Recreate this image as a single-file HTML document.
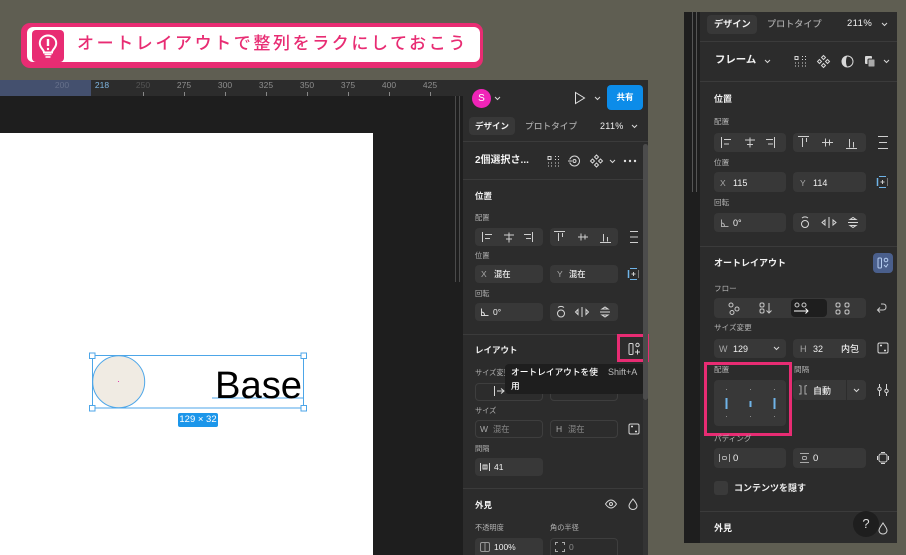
<!DOCTYPE html>
<html lang="ja"><head><meta charset="utf-8"><title>オートレイアウト</title>
<style>
html,body{margin:0;padding:0}
body{width:906px;height:555px;position:relative;overflow:hidden;background:#5f5e52;font-family:"Liberation Sans","Noto Sans CJK JP",sans-serif;color:#fff}
.a{position:absolute}
.t{position:absolute;white-space:nowrap;line-height:14px;height:14px;font-size:8.5px;font-weight:500;color:#f0f0f0;margin-top:1px}
.h{font-size:8.5px;font-weight:700;color:#f2f2f2}
.h2{font-size:9px;font-weight:700;color:#f2f2f2}
.l{font-size:7.2px;color:#b4b4b4;font-weight:400}
.l2{font-size:7.6px;color:#b4b4b4;font-weight:400}
.d{color:#a8a8a8}
.m{color:#8a8a8a;font-weight:400}
.f{position:absolute;background:#383838;border-radius:4px}
.o{position:absolute;box-sizing:border-box;border:1px solid #3e3e3e;border-radius:4px}
.r{position:absolute;background:#3b3b3b;height:1px}
.rt{position:absolute;top:80px;font-size:8.5px;line-height:11px;width:30px;text-align:center;color:#8e8e8e;font-family:"Liberation Sans",sans-serif}
svg{position:absolute;overflow:visible}
.s{fill:none;stroke:#d8d8d8;stroke-width:1}
</style></head><body>

<!-- banner -->
<div class="a" style="left:21px;top:23px;width:462px;height:45px;background:#e82c73;border-radius:9px"></div>
<div class="a" style="left:27px;top:27px;width:453px;height:35px;background:#fff;border-radius:6px"></div>
<div class="a" style="left:32px;top:30px;width:32px;height:32px;background:#e82c73;border-radius:4px"></div>
<svg style="left:32px;top:30px" width="32" height="32" viewBox="0 0 32 32"><path d="M12 22.500c0-3-4.200-4.500-4.200-9.300C7.800 8.800 11.500 5.500 16 5.500s8.200 3.300 8.200 7.700c0 4.800-4.200 6.300-4.200 9.300z" fill="none" stroke="#fff" stroke-width="2"/><path d="M16 9v7" stroke="#fff" stroke-width="2.400"/><circle cx="16" cy="19" r="1.200" fill="#fff"/><path d="M12.500 24.500h7M13.500 27h5" stroke="#fff" stroke-width="1.500"/></svg>
<div class="t" style="left:77px;top:31px;height:24px;line-height:24px;font-size:17px;letter-spacing:2.6px;font-weight:500;color:#e82c73">オートレイアウトで整列をラクにしておこう</div>

<!-- left window -->
<div class="a" style="left:0;top:80px;width:463px;height:16px;background:#2c2c2c"></div>
<div class="a" style="left:0;top:80px;width:91px;height:16px;background:#44506e"></div>
<div class="a" style="left:0;top:96px;width:463px;height:459px;background:#1e1e1e"></div>
<div class="a" style="left:455px;top:96px;width:1px;height:186px;background:#4a4a4a"></div>
<div class="a" style="left:459px;top:96px;width:1px;height:186px;background:#4a4a4a"></div>
<div class="rt" style="left:47px;color:#66708a">200</div>
<div class="rt" style="left:87px;color:#7fb6e0">218</div>
<div class="rt" style="left:128px;color:#555">250</div>
<div class="rt" style="left:169px">275</div>
<div class="rt" style="left:210px">300</div>
<div class="rt" style="left:251px">325</div>
<div class="rt" style="left:292px">350</div>
<div class="rt" style="left:333px">375</div>
<div class="rt" style="left:374px">400</div>
<div class="rt" style="left:415px">425</div>
<svg style="left:0;top:92px" width="463" height="4"><path d="M143.500 0v4M184.500 0v4M225.500 0v4M266.500 0v4M307.500 0v4M348.500 0v4M389.500 0v4M430.500 0v4" stroke="#888" stroke-width="1"/></svg>
<div class="a" style="left:0;top:133px;width:373px;height:422px;background:#fff"></div>

<!-- selection -->
<svg style="left:80px;top:340px" width="240" height="95">
<circle cx="38.700" cy="41.700" r="26" fill="#f0ebe3" stroke="#4da6e8" stroke-width="1"/>
<rect x="12.500" y="15.500" width="211" height="52.500" fill="none" stroke="#4da6e8" stroke-width="1"/>
<path d="M132 58h92" stroke="#4da6e8"/>
<rect x="38" y="41" width="1" height="1" fill="#e040b0"/>
<g fill="#fff" stroke="#4da6e8"><rect x="9.500" y="13" width="5.500" height="5.500"/><rect x="221" y="13" width="5.500" height="5.500"/><rect x="9.500" y="65.500" width="5.500" height="5.500"/><rect x="221" y="65.500" width="5.500" height="5.500"/></g>
</svg>
<div class="t" style="left:215px;top:363px;height:44px;line-height:44px;font-size:38.2px;font-weight:400;color:#000">Base</div>
<div class="a" style="left:178px;top:413px;width:40px;height:14px;background:#1c96ea;border-radius:2px;color:#fff;font-size:9.5px;line-height:14px;text-align:center">129 × 32</div>

<!-- left panel -->
<div class="a" style="left:463px;top:80px;width:185px;height:475px;background:#2c2c2c"></div>
<div class="a" style="left:472px;top:89px;width:19px;height:19px;border-radius:50%;background:#f024b8;font-size:10px;line-height:19px;text-align:center;color:#fff">S</div>
<svg style="left:494px;top:96px" width="7" height="5"><path class="s" d="M1 1l2.500 2.500L6 1"/></svg>
<svg style="left:574px;top:91px" width="12" height="14"><path d="M1.500 1.500v11l9-5.500z" fill="none" stroke="#e0e0e0" stroke-width="1"/></svg>
<svg style="left:594px;top:96px" width="7" height="5"><path class="s" d="M1 1l2.500 2.500L6 1"/></svg>
<div class="a" style="left:607px;top:85px;width:36px;height:25px;border-radius:4px;background:#0c8ce9;font-size:8.5px;font-weight:700;line-height:25px;text-align:center;color:#fff">共有</div>
<div class="a" style="left:469px;top:117px;width:46px;height:18px;border-radius:4px;background:#383838"></div>
<div class="t h" style="left:475px;top:118px">デザイン</div>
<div class="t d" style="left:525px;top:118px;font-size:8.7px">プロトタイプ</div>
<div class="t" style="left:600px;top:118px;font-size:9px;letter-spacing:.3px">211%</div>
<svg style="left:631px;top:124px" width="7" height="5"><path class="s" d="M1 1l2.500 2.500L6 1"/></svg>
<div class="r" style="left:463px;top:141px;width:185px"></div>
<div class="t h" style="left:475px;top:153px;font-size:10px">2個選択さ...</div>
<svg style="left:547px;top:155px" width="13" height="13"><path d="M1 1.500h3v3H1zM8 1.500h1M11 1.500h1M8 4.500h1M11 4.500h1M1 8h1M4 8h1M1 11h1M4 11h1M8 8h1M11 8h1M8 11h1M11 11h1" class="s"/></svg>
<svg style="left:568px;top:154px" width="13" height="14"><circle cx="6.500" cy="7" r="5" class="s"/><circle cx="6.500" cy="7" r="1.500" class="s"/><path d="M0 7h4" stroke="#2c2c2c" stroke-width="3"/><path d="M0 7h4" class="s"/></svg>
<svg style="left:590px;top:154px" width="13" height="14"><path class="s" d="M6.500 1l2 2-2 2-2-2zM6.500 9l2 2-2 2-2-2zM2.500 5l2 2-2 2-2-2zM10.500 5l2 2-2 2-2-2z"/></svg>
<svg style="left:609px;top:159px" width="7" height="5"><path class="s" d="M1 1l2.500 2.500L6 1"/></svg>
<svg style="left:623px;top:159px" width="14" height="4"><circle cx="2" cy="2" r="1.200" fill="#e0e0e0"/><circle cx="7" cy="2" r="1.200" fill="#e0e0e0"/><circle cx="12" cy="2" r="1.200" fill="#e0e0e0"/></svg>
<div class="r" style="left:463px;top:179px;width:185px"></div>
<div class="t h" style="left:475px;top:188px">位置</div>
<div class="t l" style="left:475px;top:210px">配置</div>
<div class="f" style="left:475px;top:228px;width:68px;height:18px"></div>
<div class="f" style="left:550px;top:228px;width:68px;height:18px"></div>
<svg style="left:475px;top:228px" width="170" height="18"><g class="s" style="stroke:#cfcfcf"><path d="M7.500 4v10M10 6.500h7M10 10.500h5"/><path d="M34 4.500v10M29 7h10M31 11h6"/><path d="M57.500 4v10M49 6.500h7M51 10.500h5"/><path d="M79 3.500h11M83.500 5v8M87.500 5v4"/><path d="M103 9h10M106 5.500v7M110 6.500v5"/><path d="M125 14.500h11M128.500 6v7.500M132.500 9v4.500"/><path d="M155 3.500h8M155 14.500h8M155 9h8"/></g></svg>

<div class="t l" style="left:475px;top:248px">位置</div>
<div class="f" style="left:475px;top:265px;width:68px;height:18px"></div>
<div class="f" style="left:550px;top:265px;width:68px;height:18px"></div>
<div class="t d" style="left:481px;top:266px">X</div>
<div class="t" style="left:494px;top:266px;font-size:8.3px">混在</div>
<div class="t d" style="left:557px;top:266px">Y</div>
<div class="t" style="left:569px;top:266px;font-size:8.3px">混在</div>
<svg style="left:627px;top:267px" width="13" height="14"><path d="M3 1.500H10M3 12.500H10" stroke="#6fb4e8"/><path d="M1.500 3v8" stroke="#6fb4e8" stroke-width="1.500"/><path d="M11.500 3v8" stroke="#777"/><path d="M6.500 5v4M4.500 7h4" stroke="#ccc"/></svg>
<div class="t l" style="left:475px;top:286px">回転</div>
<div class="f" style="left:475px;top:303px;width:68px;height:18px"></div>
<div class="f" style="left:550px;top:303px;width:68px;height:18px"></div>
<svg style="left:480px;top:307px" width="10" height="10"><path class="s" d="M1.500 1.500v7h7M1.500 5c2 0 3 1 3 3.500"/></svg>
<div class="t" style="left:493px;top:304px">0°</div>
<svg style="left:550px;top:303px" width="68" height="18"><g class="s"><circle cx="11" cy="10.500" r="3.500"/><path d="M8 4.500c2-1.500 4-1.500 6 0"/><path d="M32 4v10M28 6.500v5l-2.500-2.500zM36 6.500v5l2.500-2.500z"/><path d="M50 9h10M52 6l3-2 3 2zM52 12l3 2 3-2z"/></g></svg>
<div class="r" style="left:463px;top:334px;width:185px"></div>
<div class="t h" style="left:475px;top:342px">レイアウト</div>
<svg style="left:628px;top:342px" width="13" height="14"><rect x="1" y="1.500" width="4" height="11" rx="1" class="s"/><circle cx="9.500" cy="3" r="1.700" class="s"/><path d="M9.500 7.500v5M7 10h5" class="s"/></svg>
<div class="a" style="left:617px;top:334px;width:26px;height:22px;border:3px solid #e82c73"></div>
<div class="t l" style="left:475px;top:365px">サイズ変更</div>
<div class="o" style="left:475px;top:383px;width:68px;height:18px"></div>
<div class="o" style="left:550px;top:383px;width:68px;height:18px"></div>
<svg style="left:493px;top:385px" width="12" height="12"><path class="s" d="M1.500 1v10M4 6h7M8 3.500L11 6 8 8.500"/></svg>
<div class="a" style="left:505px;top:364px;width:140px;height:30px;background:#1e1e1e;border-radius:4px"></div>
<div class="t" style="left:511px;top:364px;font-size:8.7px;color:#fff">オートレイアウトを使</div>
<div class="t" style="left:511px;top:378px;font-size:8.7px;color:#fff">用</div>
<div class="t d" style="left:608px;top:364px;font-size:9px;font-weight:400;color:#bbb">Shift+A</div>
<div class="t l" style="left:475px;top:403px">サイズ</div>
<div class="o" style="left:475px;top:420px;width:68px;height:18px"></div>
<div class="o" style="left:550px;top:420px;width:68px;height:18px"></div>
<div class="t d" style="left:480px;top:421px">W</div>
<div class="t m" style="left:493px;top:421px;font-size:8.3px">混在</div>
<div class="t d" style="left:556px;top:421px">H</div>
<div class="t m" style="left:568px;top:421px;font-size:8.3px">混在</div>
<svg style="left:628px;top:423px" width="12" height="12"><rect x="1" y="1" width="10" height="10" rx="1.500" class="s"/><path d="M3 3.500h2M9 8.500H7" stroke="#ddd" stroke-width="1.400"/></svg>
<div class="t l" style="left:475px;top:441px">間隔</div>
<div class="f" style="left:475px;top:458px;width:68px;height:18px"></div>
<svg style="left:480px;top:462px" width="10" height="10"><path class="s" d="M.5 1v8M9.500 1v8M3 3h4v4H3zM5 3v4"/></svg>
<div class="t" style="left:494px;top:459px">41</div>
<div class="r" style="left:463px;top:488px;width:185px"></div>
<div class="t h" style="left:475px;top:497px">外見</div>
<svg style="left:605px;top:499px" width="12" height="10"><path class="s" d="M.5 5C2.500 2 4 1 6 1s3.500 1 5.500 4C9.500 8 8 9 6 9S2.500 8 .5 5z"/><circle cx="6" cy="5" r="1.500" class="s"/></svg>
<svg style="left:628px;top:498px" width="10" height="12"><path class="s" d="M5 1C3.500 3 1 5.500 1 8a4 3.500 0 0 0 8 0C9 5.500 6.500 3 5 1z"/></svg>
<div class="t l" style="left:475px;top:520px">不透明度</div>
<div class="t l" style="left:550px;top:520px">角の半径</div>
<div class="f" style="left:475px;top:538px;width:68px;height:17px;border-radius:4px 4px 0 0"></div>
<div class="o" style="left:550px;top:538px;width:68px;height:17px;border-bottom:0;border-radius:4px 4px 0 0"></div>
<svg style="left:480px;top:542px" width="10" height="10"><rect x=".5" y=".5" width="9" height="9" rx="1.500" class="s" style="stroke:#999"/><path d="M5 .5v9" stroke="#999"/></svg>
<div class="t" style="left:494px;top:539px">100%</div>
<svg style="left:555px;top:542px" width="10" height="10"><path d="M.5 3V.5H3M7 .5h2.500V3M9.500 7v2.500H7M3 9.500H.5V7" fill="none" stroke="#aaa"/></svg>
<div class="t m" style="left:569px;top:539px">0</div>
<div class="a" style="left:643px;top:144px;width:5px;height:256px;background:#4c4c4c;border-radius:3px"></div>
<div class="a" style="left:643px;top:400px;width:5px;height:155px;background:#343434"></div>

<!-- right window -->
<div class="a" style="left:684px;top:12px;width:16px;height:531px;background:#1e1e1e"></div>
<div class="a" style="left:692px;top:12px;width:1px;height:180px;background:#555"></div>
<div class="a" style="left:696px;top:12px;width:1px;height:180px;background:#555"></div>
<div class="a" style="left:700px;top:12px;width:197px;height:531px;background:#2c2c2c"></div>
<div class="a" style="left:707px;top:15px;width:50px;height:19px;border-radius:4px;background:#383838"></div>
<div class="t h2" style="left:714px;top:16px;font-size:9.2px">デザイン</div>
<div class="t d" style="left:767px;top:16px;font-size:9.1px">プロトタイプ</div>
<div class="t" style="left:847px;top:16px;font-size:9.5px;letter-spacing:.4px">211%</div>
<svg style="left:881px;top:22px" width="7" height="5"><path class="s" d="M1 1l2.500 2.500L6 1"/></svg>
<div class="r" style="left:700px;top:41px;width:197px"></div>
<div class="t h" style="left:715px;top:53px;font-size:10.4px">フレーム</div>
<svg style="left:764px;top:59px" width="7" height="5"><path class="s" d="M1 1l2.500 2.500L6 1"/></svg>
<svg style="left:794px;top:55px" width="13" height="13"><path d="M1 1.500h3v3H1zM8 1.500h1M11 1.500h1M8 4.500h1M11 4.500h1M1 8h1M4 8h1M1 11h1M4 11h1M8 8h1M11 8h1M8 11h1M11 11h1" class="s"/></svg>
<svg style="left:817px;top:55px" width="13" height="13"><path class="s" d="M6.500.5l2 2-2 2-2-2zM6.500 8.500l2 2-2 2-2-2zM2.500 4.500l2 2-2 2-2-2zM10.500 4.500l2 2-2 2-2-2z"/></svg>
<svg style="left:841px;top:55px" width="13" height="13"><circle cx="6.500" cy="6.500" r="5.500" class="s"/><path d="M6.500 1a5.500 5.500 0 0 0 0 11c-2-2-2-9 0-11z" fill="#d8d8d8"/></svg>
<svg style="left:864px;top:55px" width="12" height="13"><rect x="1" y="1" width="7" height="8" rx="1" fill="#d8d8d8"/><rect x="4" y="4" width="7" height="8" rx="1" fill="#aaa" stroke="#2c2c2c"/></svg>
<svg style="left:883px;top:59px" width="7" height="5"><path class="s" d="M1 1l2.500 2.500L6 1"/></svg>
<div class="r" style="left:700px;top:81px;width:197px"></div>
<div class="t h2" style="left:714px;top:91px">位置</div>
<div class="t l2" style="left:714px;top:114px">配置</div>
<div class="f" style="left:714px;top:133px;width:72px;height:19px"></div>
<div class="f" style="left:793px;top:133px;width:73px;height:19px"></div>
<svg style="left:714px;top:133px" width="176" height="19"><g class="s" style="stroke:#cfcfcf"><path d="M7.500 4v11M10 6.500h7M10 11h5"/><path d="M36 4.500v10M31 7h10M33 11.500h6"/><path d="M60.500 4v11M52 6.500h7M54 11h5"/><path d="M84 3.500h11M88.500 5v9M92.500 5v4"/><path d="M108 9.500h11M111.500 5.500v8M115.500 6.500v6"/><path d="M132 15.500h11M135.500 6v8.500M139.500 9v5.500"/><path d="M164 3.500h10M164 15.500h10M165 9.500h8"/></g></svg>
<div class="t l2" style="left:714px;top:155px">位置</div>
<div class="f" style="left:714px;top:172px;width:72px;height:20px"></div>
<div class="f" style="left:793px;top:172px;width:73px;height:20px"></div>
<div class="t d" style="left:720px;top:175px">X</div>
<div class="t" style="left:733px;top:175px;font-size:9px">115</div>
<div class="t d" style="left:800px;top:175px">Y</div>
<div class="t" style="left:813px;top:175px;font-size:9px">114</div>
<svg style="left:876px;top:175px" width="13" height="14"><path d="M3 1.500H10M3 12.500H10" stroke="#6fb4e8"/><path d="M1.500 3v8" stroke="#6fb4e8" stroke-width="1.500"/><path d="M11.500 3v8" stroke="#777"/><path d="M6.500 5v4M4.500 7h4" stroke="#ccc"/></svg>
<div class="t l2" style="left:714px;top:195px">回転</div>
<div class="f" style="left:714px;top:213px;width:72px;height:19px"></div>
<div class="f" style="left:793px;top:213px;width:73px;height:19px"></div>
<svg style="left:720px;top:218px" width="10" height="10"><path class="s" d="M1.500 1.500v7h7M1.500 5c2 0 3 1 3 3.500" style="stroke:#aaa"/></svg>
<div class="t" style="left:733px;top:215px;font-size:9px">0°</div>
<svg style="left:793px;top:213px" width="73" height="19"><g class="s"><circle cx="12" cy="11" r="3.500"/><path d="M9 5c2-1.500 4-1.500 6 0"/><path d="M36 4v11M32 7v5l-3-2.500zM40 7v5l3-2.500z"/><path d="M55 9.500h10M57 6.500l3-2 3 2zM57 12.500l3 2 3-2z"/></g></svg>
<div class="r" style="left:700px;top:246px;width:197px"></div>
<div class="t h2" style="left:714px;top:255px">オートレイアウト</div>
<div class="a" style="left:873px;top:253px;width:20px;height:20px;border-radius:4px;background:#4a5f8c"></div>
<svg style="left:877px;top:257px" width="13" height="13"><rect x="1" y="1" width="3.500" height="10" rx="1" fill="none" stroke="#b5cdf0"/><circle cx="9" cy="3" r="1.800" fill="none" stroke="#b5cdf0"/><path d="M7 8l2 2 2-3" fill="none" stroke="#b5cdf0"/></svg>
<div class="t l2" style="left:714px;top:281px">フロー</div>
<div class="f" style="left:714px;top:298px;width:152px;height:20px"></div>
<div class="a" style="left:791px;top:299px;width:36px;height:18px;border-radius:4px;background:#1e1e1e"></div>
<svg style="left:714px;top:298px" width="176" height="20"><g class="s" style="stroke:#c8c8c8"><circle cx="17" cy="7" r="2"/><circle cx="23" cy="11" r="2"/><circle cx="18" cy="14.500" r="2"/><rect x="46" y="5" width="4" height="4" rx="1.500"/><rect x="46" y="11" width="4" height="4" rx="1.500"/><path d="M55 5v10M52.500 12.500L55 15l2.500-2.500"/><circle cx="83" cy="7" r="2"/><circle cx="90" cy="7" r="2"/><path d="M80 13h14M91.500 10.500L94 13l-2.500 2.500" style="stroke:#fff"/><rect x="122" y="5" width="4" height="4" rx="1.500"/><rect x="131" y="5" width="4" height="4" rx="1.500"/><rect x="122" y="12" width="4" height="4" rx="1.500"/><rect x="131" y="12" width="4" height="4" rx="1.500"/><path d="M164 12h5c2 0 3-1 3-3s-1-3-3-3h-2M166 9.500L163.500 12l2.500 2.500"/></g></svg>
<div class="t l2" style="left:714px;top:320px">サイズ変更</div>
<div class="f" style="left:714px;top:339px;width:72px;height:19px"></div>
<div class="f" style="left:793px;top:339px;width:73px;height:19px"></div>
<div class="t d" style="left:719px;top:341px;font-size:9px">W</div>
<div class="t" style="left:733px;top:341px;font-size:9px">129</div>
<svg style="left:773px;top:346px" width="7" height="5"><path class="s" d="M1 1l2.500 2.500L6 1"/></svg>
<div class="t d" style="left:800px;top:341px;font-size:9px">H</div>
<div class="t" style="left:813px;top:341px;font-size:9px">32</div>
<div class="t" style="left:841px;top:341px;font-size:9px">内包</div>
<svg style="left:877px;top:342px" width="12" height="12"><rect x="1" y="1" width="10" height="10" rx="1.500" class="s"/><path d="M3 3.500h2M9 8.500H7" stroke="#ddd" stroke-width="1.400"/></svg>
<div class="t l2" style="left:714px;top:362px">配置</div>
<div class="t l2" style="left:794px;top:362px">間隔</div>
<div class="f" style="left:714px;top:380px;width:72px;height:46px"></div>
<svg style="left:714px;top:380px" width="72" height="46"><path d="M12 9.500h1M36 9.500h1M60 9.500h1M12 36.500h1M36 36.500h1M60 36.500h1" stroke="#8a8a8a"/><path d="M12.500 18v11M60.500 18v11" stroke="#6fb4e8" stroke-width="2"/><path d="M36.500 21v6" stroke="#6fb4e8" stroke-width="2"/></svg>
<div class="f" style="left:793px;top:380px;width:53px;height:20px;border-radius:4px 0 0 4px"></div>
<div class="f" style="left:847px;top:380px;width:19px;height:20px;border-radius:0 4px 4px 0"></div>
<svg style="left:798px;top:385px" width="10" height="10"><path d="M1 .5L3 1v8H1M9 .5L7 1v8h2" fill="none" stroke="#aaa"/></svg>
<div class="t" style="left:813px;top:383px;font-size:9px">自動</div>
<svg style="left:853px;top:388px" width="7" height="5"><path class="s" d="M1 1l2.500 2.500L6 1"/></svg>
<svg style="left:877px;top:383px" width="12" height="14"><path class="s" d="M2.500 1v3M2.500 8v5M9.500 1v5M9.500 10v3"/><circle cx="2.500" cy="6" r="1.700" class="s"/><circle cx="9.500" cy="8" r="1.700" class="s"/></svg>
<div class="a" style="left:703.500px;top:362px;width:82px;height:68px;border:3px solid #e82c73"></div>
<div class="t l2" style="left:714px;top:430px;margin-top:2px">パディング</div>
<div class="f" style="left:714px;top:448px;width:72px;height:20px"></div>
<div class="f" style="left:793px;top:448px;width:73px;height:20px"></div>
<svg style="left:719px;top:453px" width="11" height="10"><path d="M.5 1v8M10.500 1v8" stroke="#aaa"/><rect x="3.500" y="3.500" width="4" height="3" rx="1" fill="none" stroke="#aaa"/></svg>
<div class="t" style="left:733px;top:451px;font-size:9.500px">0</div>
<svg style="left:799px;top:453px" width="11" height="10"><path d="M1 .5h9M1 9.500h9" stroke="#aaa"/><rect x="3.500" y="3.500" width="4" height="3" rx="1" fill="none" stroke="#aaa"/></svg>
<div class="t" style="left:813px;top:451px;font-size:9.500px">0</div>
<svg style="left:877px;top:452px" width="12" height="12"><rect x="2" y="2" width="8" height="8" rx="2" class="s"/><path d="M.5 4v4M11.500 4v4M4 .5h4M4 11.500h4" class="s"/></svg>
<div class="a" style="left:714px;top:481px;width:14px;height:14px;border-radius:3px;background:#3a3a3a"></div>
<div class="t h2" style="left:734px;top:480px">コンテンツを隠す</div>
<div class="r" style="left:700px;top:511px;width:197px"></div>
<div class="t h2" style="left:714px;top:520px">外見</div>
<svg style="left:878px;top:522px" width="10" height="13"><path class="s" d="M5 1C3.500 3.500 1 6 1 8.500a4 3.500 0 0 0 8 0C9 6 6.500 3.500 5 1z"/></svg>
<div class="a" style="left:853px;top:511px;width:26px;height:26px;border-radius:50%;background:#1e1e1e;color:#ddd;font-size:13px;line-height:25px;text-align:center">?</div>
</body></html>
